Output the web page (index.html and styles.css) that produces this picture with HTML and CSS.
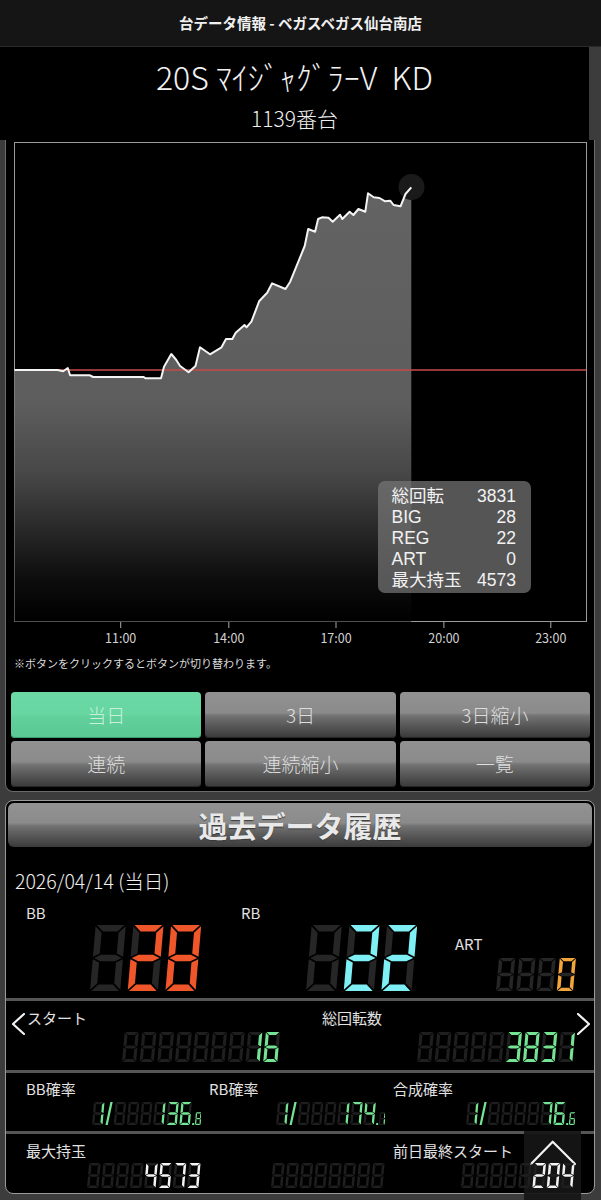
FILE: index.html
```html
<!DOCTYPE html>
<html lang="ja">
<head>
<meta charset="utf-8">
<title>台データ情報</title>
<link rel="stylesheet" href="styles.css">
</head>
<body>
<header class="topbar">台データ情報 - ベガスベガス仙台南店</header>

<section class="machine">
  <h1 class="machine-name">20S ﾏｲｼﾞｬｸﾞﾗｰV&nbsp; KD</h1>
  <p class="machine-no">1139番台</p>
</section>

<section class="panel chart-panel">
  <div class="chart-wrap">
    <svg class="chart" width="588" height="506" viewBox="6 140 588 506">
      <defs>
        <linearGradient id="fillg" x1="0" y1="187" x2="0" y2="622" gradientUnits="userSpaceOnUse">
          <stop offset="0" stop-color="#636363"/>
          <stop offset="0.5" stop-color="#5d5d5d"/>
          <stop offset="0.66" stop-color="#474747"/>
          <stop offset="0.9" stop-color="#0d0d0d"/>
          <stop offset="1" stop-color="#000"/>
        </linearGradient>
      </defs>
      <rect x="14.5" y="142.5" width="572" height="479" fill="#000" stroke="#9c9c9c" stroke-width="1"/>
      <polygon fill="url(#fillg)" points="14.5,621.5 14.5,370 57.5,370 63.2,371.3 67.8,368 70.1,375.3 90,375.3 93.1,377 143.7,377 145.6,378.3 161,378.3 164,366.7 171.3,354 176.3,360 180.1,366 188.6,372.3 195.5,366 200,347.3 210,354.3 221.5,347.3 226,339 232.3,339 235.7,332.7 244.5,325 246.5,327.3 251.4,321.7 259.1,301.3 267.2,292.7 272.1,283.3 285.5,289 290.2,281.7 304.7,246 308.2,229 315.1,231.7 318.1,219 322,217.3 328.5,217.7 332.7,221.7 340,214.7 342.3,219 349.6,211.7 353.4,215 358.4,209 365.3,211.7 368,193.3 373.7,197.3 379.5,198 385.2,201.3 390.2,200.7 393.6,205 400.5,206.3 405.5,194 411.3,187.3 411.3,621.5"/>
      <line x1="15" y1="370" x2="586" y2="370" stroke="#c44a4a" stroke-width="1.5"/>
      <circle cx="411.5" cy="187" r="13" fill="#1a1a1a"/>
      <polyline fill="none" stroke="#f4f4f4" stroke-width="2" stroke-linejoin="round" points="14.5,370 57.5,370 63.2,371.3 67.8,368 70.1,375.3 90,375.3 93.1,377 143.7,377 145.6,378.3 161,378.3 164,366.7 171.3,354 176.3,360 180.1,366 188.6,372.3 195.5,366 200,347.3 210,354.3 221.5,347.3 226,339 232.3,339 235.7,332.7 244.5,325 246.5,327.3 251.4,321.7 259.1,301.3 267.2,292.7 272.1,283.3 285.5,289 290.2,281.7 304.7,246 308.2,229 315.1,231.7 318.1,219 322,217.3 328.5,217.7 332.7,221.7 340,214.7 342.3,219 349.6,211.7 353.4,215 358.4,209 365.3,211.7 368,193.3 373.7,197.3 379.5,198 385.2,201.3 390.2,200.7 393.6,205 400.5,206.3 405.5,194 411.3,187.3"/>
      <g class="ticks" stroke="#aaaaaa" stroke-width="1">
        <line x1="120.7" y1="622" x2="120.7" y2="628"/>
        <line x1="228.8" y1="622" x2="228.8" y2="628"/>
        <line x1="336" y1="622" x2="336" y2="628"/>
        <line x1="443.9" y1="622" x2="443.9" y2="628"/>
        <line x1="550.8" y1="622" x2="550.8" y2="628"/>
      </g>
      <g class="ax">
        <text x="120.7" y="642.5">11:00</text>
        <text x="228.8" y="642.5">14:00</text>
        <text x="336" y="642.5">17:00</text>
        <text x="443.9" y="642.5">20:00</text>
        <text x="550.8" y="642.5">23:00</text>
      </g>
    </svg>
    <div class="tip">
      <div class="tip-row"><span>総回転</span><span>3831</span></div>
      <div class="tip-row"><span>BIG</span><span>28</span></div>
      <div class="tip-row"><span>REG</span><span>22</span></div>
      <div class="tip-row"><span>ART</span><span>0</span></div>
      <div class="tip-row"><span>最大持玉</span><span>4573</span></div>
    </div>
  </div>
  <p class="note">※ボタンをクリックするとボタンが切り替わります。</p>
  <div class="btn-grid">
    <button class="btn active">当日</button>
    <button class="btn">3日</button>
    <button class="btn">3日縮小</button>
    <button class="btn">連続</button>
    <button class="btn">連続縮小</button>
    <button class="btn">一覧</button>
  </div>
</section>

<section class="panel history">
  <h2 class="history-head">過去データ履歴</h2>
  <p class="date">2026/04/14 (当日)</p>

  <div class="counters">
    <div class="counter c-bb"><span class="lbl">BB</span><div class="seg s-xl red" data-v=" 28"></div></div>
    <div class="counter c-rb"><span class="lbl">RB</span><div class="seg s-xl cyan" data-v=" 22"></div></div>
    <div class="counter c-art"><span class="lbl lbl-art">ART</span><div class="seg s-md orange" data-v="   0"></div></div>
  </div>

  <div class="row row-start">
    <span class="chev"><svg viewBox="0 0 14 22" width="14" height="22"><polyline points="13,1 2,11 13,21"/></svg></span>
    <div class="cell cell-wide"><span class="lbl">スタート</span><div class="seg s-sm green" data-v="       16"></div></div>
    <div class="cell cell-wide"><span class="lbl">総回転数</span><div class="seg s-sm green" data-v="     3831"></div></div>
    <span class="chev chev-r"><svg viewBox="0 0 13 22" width="13" height="22"><polyline points="1,1 12,11 1,21"/></svg></span>
  </div>

  <div class="row row-grid row-prob">
    <div class="cell"><span class="lbl">BB確率</span><div class="seg s-xs green" data-v="1/   136.8"></div></div>
    <div class="cell"><span class="lbl">RB確率</span><div class="seg s-xs green" data-v="1/   174.1"></div></div>
    <div class="cell"><span class="lbl">合成確率</span><div class="seg s-xs green" data-v="1/    76.6"></div></div>
  </div>

  <div class="row row-grid row-max">
    <div class="cell"><span class="lbl">最大持玉</span><div class="seg s-mx white" data-v="    4573"></div></div>
    <div class="cell"><div class="seg s-mx white" data-v="        "></div></div>
    <div class="cell"><span class="lbl">前日最終スタート</span><div class="seg s-mx white raised" data-v="     204"></div></div>
  </div>
</section>

<a class="to-top" href="#" aria-label="ページトップへ"><svg viewBox="0 0 57 69" width="57" height="69"><polyline points="7,33 28.7,10.7 51,33"/></svg></a>

<script src="app.js"></script>
</body>
</html>
```

FILE: styles.css
```css
* { box-sizing: border-box; }
html, body { margin: 0; padding: 0; }
body {
  background: #3c3c3c;
  color: #eee;
  font-family: "Noto Sans CJK JP", "Noto Sans", sans-serif;
  width: 601px;
  height: 1200px;
  overflow: hidden;
}

.topbar {
  height: 47px;
  line-height: 46px;
  background: #151515;
  border-bottom: 1px solid #2a2a2a;
  text-align: center;
  font-size: 14.5px;
  font-weight: 700;
  color: #f0f0f0;
}

.machine {
  background: #000;
  margin-right: 12px;
  padding: 11px 0 9px;
  text-align: center;
}
.machine-name {
  margin: 0;
  font-size: 32px;
  line-height: 37px;
  font-weight: 300;
  color: #f2f2f2;
}
.machine-no {
  margin: 10px 0 0;
  font-size: 21px;
  line-height: 26px;
  font-weight: 300;
  color: #eee;
}

.panel {
  background: #000;
  margin: 0 6px 0 5px;
  border: 1px solid #8a8a8a;
}
.chart-panel {
  border-top: none;
  border-color: #6a6a6a;
  border-radius: 0 0 8px 8px;
  padding-bottom: 4px;
}
.chart-wrap { position: relative; }
.chart { display: block; }
.ax text {
  font-family: "Noto Sans CJK JP", "Noto Sans", sans-serif;
  font-size: 12.5px;
  fill: #d2d2d2;
  text-anchor: middle;
}

.tip {
  position: absolute;
  left: 371.5px;
  top: 341px;
  width: 153.5px;
  height: 112px;
  padding: 5px 15px 3px 14px;
  border-radius: 7px;
  background: rgba(118, 118, 118, 0.72);
  display: flex;
  flex-direction: column;
  font-family: "Liberation Sans", "Noto Sans CJK JP", sans-serif;
  font-size: 17.5px;
  line-height: 21px;
  color: #f2f2f2;
}
.tip-row { display: flex; justify-content: space-between; height: 21px; }

.note {
  margin: 8px 0 0 8px;
  font-size: 11px;
  line-height: 18px;
  color: #dcdcdc;
}

.btn-grid {
  margin-top: 20px;
  padding: 0 4px 0 5px;
  display: grid;
  grid-template-columns: repeat(3, 1fr);
  grid-auto-rows: 46px;
  column-gap: 4px;
  row-gap: 3px;
}
.btn {
  border: none;
  border-radius: 4px;
  background: linear-gradient(to bottom, #919191 0%, #8b8b8b 45%, #727272 52%, #575757 74%, #383838 100%);
  box-shadow: inset 0 -1px 0 #262626;
  color: #dedede;
  font-family: "Noto Sans CJK JP", "Noto Sans", sans-serif;
  font-size: 19px;
  line-height: 46px;
  font-weight: 300;
  padding: 0;
}
.btn.active {
  background: linear-gradient(to bottom, #6cd9a5 0%, #67d6a1 48%, #61d09a 54%, #5ac892 100%);
  box-shadow: inset 0 -1px 0 #3f9a70;
  color: #c8f1dd;
}

.history {
  margin-top: 8px;
  border-color: #9a9a9a;
  border-radius: 8px;
}
.history-head {
  margin: 2px 2px 0;
  height: 44px;
  border-radius: 6px;
  background: linear-gradient(to bottom, #929292 0%, #8b8b8b 45%, #727272 52%, #585858 74%, #3a3a3a 100%);
  text-align: center;
  font-size: 29px;
  line-height: 44px;
  font-weight: 700;
  color: #e9e9e9;
  text-shadow: 0 1px 1px #3a3a3a;
}
.date {
  margin: 22px 0 0 9px;
  font-size: 19.5px;
  line-height: 24px;
  font-weight: 300;
  color: #f0f0f0;
}

.lbl {
  display: block;
  font-size: 15px;
  line-height: 18px;
  color: #e2e2e2;
  white-space: nowrap;
}

.counters {
  display: flex;
  align-items: flex-end;
  padding: 11px 0 0 20px;
  margin-bottom: 7px;
}
.counter { display: flex; flex-direction: column; }
.counter .seg { align-self: flex-end; margin-top: 3px; }
.c-bb { width: 175px; }
.c-rb { width: 176px; margin-left: 40px; }
.c-art { width: 121px; margin-left: 38px; }
.c-art .seg { margin-top: 5px; }

.row { border-top: 3px solid #565656; }
.row-start {
  display: flex;
  padding: 8px 4px 8px 5px;
}
.chev { display: block; width: 14px; height: 22px; margin-top: 4px; flex: none; }
.chev-r { width: 13px; margin-left: 2px; }
.chev svg { display: block; }
.chev polyline, .to-top polyline {
  fill: none;
  stroke: #f2f2f2;
  stroke-width: 2.2;
  stroke-linecap: round;
  stroke-linejoin: round;
}
.cell { display: flex; flex-direction: column; }
.cell .seg { align-self: flex-end; }
.cell-wide { width: 253px; }
.cell-wide:first-of-type { margin-left: 2px; }
.cell-wide + .cell-wide { margin-left: 42px; }
.row-start .seg { margin-top: 5px; }

.row-grid {
  display: grid;
  grid-template-columns: 175px 176px 182px;
  column-gap: 8px;
  align-items: end;
  padding-left: 20px;
}
.row-prob { padding-top: 7px; padding-bottom: 6px; }
.row-prob .seg { margin-top: 4px; }
.row-max { padding-top: 8px; padding-bottom: 5px; }
.row-max .seg { margin-top: 3px; }

.seg { display: flex; justify-content: flex-end; }
.seg svg { display: block; height: 100%; width: auto; }
.s-xl { height: 66px; }
.s-md { height: 33px; }
.s-sm { height: 30px; }
.s-xs { height: 23px; }
.s-mx { height: 25px; }
.s-md svg { width: 80px; }
.s-sm svg { width: 158px; }
.seg .off { fill: #262626; }
.s-sm .off, .s-xs .off, .s-mx .off { fill: #1f1f1f; }
.red .on { fill: #ef572b; }
.cyan .on { fill: #7eeff4; }
.orange .on { fill: #f1a53a; }
.green .on { fill: #74e393; }
.white .on { fill: #f4f4f4; }
.raised { position: relative; z-index: 3; }

.to-top {
  position: fixed;
  right: 20px;
  bottom: 0;
  width: 57px;
  height: 69px;
  background: rgba(22, 22, 22, 0.93);
  z-index: 2;
  display: block;
}
.to-top svg { display: block; }
```

FILE: app.js
```js
(function () {
  var W = 32, H = 70, T = 7, G = 1.3, SK = 6, ADV = 40;
  var MAP = {
    '0': 'abcdef', '1': 'bc', '2': 'abdeg', '3': 'abcdg', '4': 'bcfg',
    '5': 'acdfg', '6': 'acdefg', '7': 'abc', '8': 'abcdefg', '9': 'abcdfg'
  };
  var h2 = H / 2, t2 = T / 2;
  var P = {
    a: [[G, 0], [W - G, 0], [W - G - T, T], [G + T, T]],
    b: [[W, G], [W, h2 - G], [W - T, h2 - t2 - G], [W - T, T + G]],
    c: [[W, h2 + G], [W, H - G], [W - T, H - T - G], [W - T, h2 + t2 + G]],
    d: [[G, H], [W - G, H], [W - G - T, H - T], [G + T, H - T]],
    e: [[0, h2 + G], [0, H - G], [T, H - T - G], [T, h2 + t2 + G]],
    f: [[0, G], [0, h2 - G], [T, h2 - t2 - G], [T, T + G]],
    g: [[G, h2], [G + T, h2 - t2], [W - G - T, h2 - t2], [W - G, h2], [W - G - T, h2 + t2], [G + T, h2 + t2]]
  };
  function pts(poly, ox, oy, s) {
    return poly.map(function (p) {
      var x = p[0] + SK * (1 - p[1] / H);
      return (ox + x * s).toFixed(2) + ',' + (oy + p[1] * s).toFixed(2);
    }).join(' ');
  }
  function digit(ch, ox, oy, s) {
    var on = MAP[ch] || '';
    return 'abcdefg'.split('').map(function (k) {
      return '<polygon class="' + (on.indexOf(k) >= 0 ? 'on' : 'off') + '" points="' + pts(P[k], ox, oy, s) + '"/>';
    }).join('');
  }
  var els = document.querySelectorAll('.seg');
  for (var n = 0; n < els.length; n++) {
    var el = els[n];
    var str = el.getAttribute('data-v') || '';
    var x = 0, out = '';
    for (var i = 0; i < str.length; i++) {
      var ch = str.charAt(i);
      if (ch === '/') {
        out += '<polygon class="on" points="' + (x + 1) + ',' + H + ' ' + (x + 8) + ',' + H + ' ' + (x + 23) + ',0 ' + (x + 16) + ',0"/>';
        x += 26;
      } else if (ch === '.') {
        var d = 6;
        out += '<rect class="on" x="' + (x - 1) + '" y="' + (H - d) + '" width="' + d + '" height="' + d + '"/>';
        x += d + 1;
        var s = 0.55;
        i++;
        out += digit(str.charAt(i), x, H - H * s, s);
        x += ADV * s;
      } else {
        out += digit(ch, x, 0, 1);
        x += ADV;
      }
    }
    el.innerHTML = '<svg viewBox="0 0 ' + (x - 2) + ' ' + H + '" preserveAspectRatio="none">' + out + '</svg>';
  }
})();
```
